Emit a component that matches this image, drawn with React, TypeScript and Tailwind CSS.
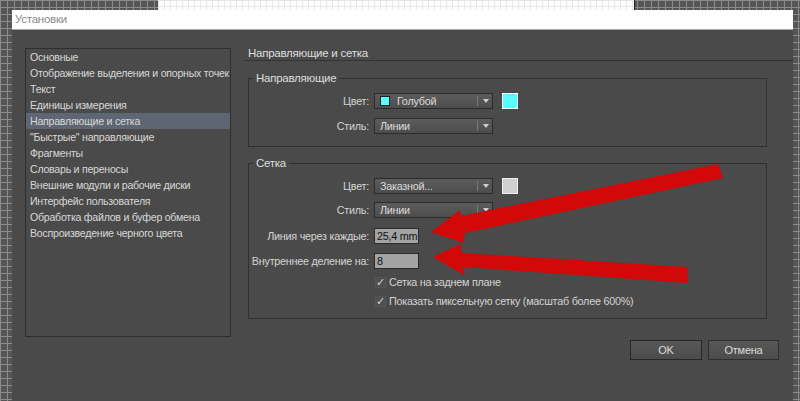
const font = "font-['Liberation_Sans','Noto_Sans',sans-serif]";

const menuItems = [
  "Основные",
  "Отображение выделения и опорных точек",
  "Текст",
  "Единицы измерения",
  "Направляющие и сетка",
  "\"Быстрые\" направляющие",
  "Фрагменты",
  "Словарь и переносы",
  "Внешние модули и рабочие диски",
  "Интерфейс пользователя",
  "Обработка файлов и буфер обмена",
  "Воспроизведение черного цвета",
];

function Select({ value, swatch }: { value: string; swatch?: string }) {
  return (
    <div className="flex h-[16px] w-[119px] items-center border border-[#2b2b2b] bg-gradient-to-b from-[#5c5c5c] to-[#4d4d4d] pl-[5px]">
      {swatch && <span className={`mr-[7px] h-[10px] w-[10px] border border-[#222] ${swatch}`} />}
      <span className="flex-1 truncate leading-[14px] text-[#dcdcdc]">{value}</span>
      <span className="h-[10px] w-px bg-[#7a7a7a]" />
      <span className="ml-[5px] mr-[3px] h-0 w-0 border-x-[3.5px] border-t-[4px] border-x-transparent border-t-[#cfcfcf]" />
    </div>
  );
}

function Row({ label, children, className = "" }: { label: string; children: React.ReactNode; className?: string }) {
  return (
    <div className={`flex items-center ${className}`}>
      <span className="w-[121px] whitespace-nowrap pr-[1px] text-right leading-[16px] text-[#d4d4d4]">{label}</span>
      <div className="ml-[4px] flex items-center">{children}</div>
    </div>
  );
}

function Field({ value }: { value: string }) {
  return (
    <div className="flex h-[16px] w-[45px] items-center whitespace-nowrap border border-[#2b2b2b] bg-[#a3a3a3] pl-[2px] leading-[14px] text-[#111]">
      {value}
    </div>
  );
}

function Check({ label, className = "" }: { label: string; className?: string }) {
  return (
    <div className={`ml-[126px] flex h-[16px] items-center whitespace-nowrap ${className}`}>
      <span className="flex h-[11px] w-[11px] items-center justify-center border border-[#555] bg-[#4f4f4f] text-[11px] leading-none text-[#d8d8d8]">
        ✓
      </span>
      <span className="ml-[3px] text-[#d4d4d4]">{label}</span>
    </div>
  );
}

export default function App() {
  return (
    <div className={`relative h-[401px] w-[800px] overflow-hidden bg-[#555] bg-[linear-gradient(#8c8c8c_1px,transparent_1px),linear-gradient(90deg,#8c8c8c_1px,transparent_1px)] bg-[length:7px_7px] text-[10.8px] tracking-[-0.25px] ${font}`}>
      <div className="flex h-[10px]">
        <div className="w-[158px]" />
        <div className="w-[477px] border-r border-[#222] bg-white bg-[linear-gradient(#e6e6e6_1px,transparent_1px),linear-gradient(90deg,#e6e6e6_1px,transparent_1px)] bg-[length:6px_6px]" />
      </div>

      <div className="ml-[12px] flex h-[391px] w-[781px] flex-col bg-[#4a4a4a]">
        <div className="flex h-[20px] items-center border-b border-[#a9a9a9] bg-white pl-[3px] text-[11.5px] text-[#8a8a8a]">
          Установки
        </div>

        <div className="flex h-[291px] pt-[16px]">
          <div className="ml-[13px] mt-[2px] h-[289px] w-[206px] border border-[#2e2e2e] text-[10.6px]">
            {menuItems.map((item, i) => (
              <div
                key={item}
                className={`h-[16px] whitespace-nowrap pl-[4px] leading-[16px] text-[#d8d8d8] ${i === 4 ? "bg-[#5e6674]" : ""}`}
              >
                {item}
              </div>
            ))}
          </div>

          <div className="ml-[14px] flex flex-1 flex-col">
            <div className="h-[15px] border-b border-[#333] pl-[3px] text-[11.5px] leading-[14px] text-[#dedede]">
              Направляющие и сетка
            </div>

            <fieldset className="ml-[3px] mr-[26px] mt-[10px] h-[76px] border border-[#303030]">
              <legend className="ml-[4px] px-[3px] text-[11.5px] leading-[14px] text-[#dedede]">Направляющие</legend>
              <Row label="Цвет:" className="mt-[8px]">
                <Select value="Голубой" swatch="bg-[#55ffff]" />
                <span className="ml-[9px] h-[16px] w-[16px] border border-white bg-[#55ffff]" />
              </Row>
              <Row label="Стиль:" className="mt-[9px]">
                <Select value="Линии" />
              </Row>
            </fieldset>

            <fieldset className="ml-[3px] mr-[26px] mt-[9px] h-[163px] border border-[#303030]">
              <legend className="ml-[4px] px-[3px] text-[11.5px] leading-[14px] text-[#dedede]">Сетка</legend>
              <Row label="Цвет:" className="mt-[8px]">
                <Select value="Заказной..." />
                <span className="ml-[9px] h-[16px] w-[16px] border border-[#eee] bg-[#d0d0d0]" />
              </Row>
              <Row label="Стиль:" className="mt-[8px]">
                <Select value="Линии" />
              </Row>
              <Row label="Линия через каждые:" className="mt-[10px]">
                <Field value="25,4 mm" />
              </Row>
              <Row label="Внутреннее деление на:" className="mt-[9px]">
                <Field value="8" />
              </Row>
              <Check label="Сетка на заднем плане" className="mt-[5px]" />
              <Check label="Показать пиксельную сетку (масштаб более 600%)" className="mt-[3px]" />
            </fieldset>
          </div>
        </div>

        <div className="mt-[19px] flex justify-end gap-[6px] pr-[14px]">
          <button className="h-[20px] w-[72px] border border-[#262626] bg-gradient-to-b from-[#575757] to-[#4c4c4c] text-[11px] text-[#dcdcdc]">OK</button>
          <button className="h-[20px] w-[71px] border border-[#2e2e2e] bg-gradient-to-b from-[#575757] to-[#4c4c4c] text-[11px] text-[#dcdcdc]">Отмена</button>
        </div>
      </div>

      <svg className="pointer-events-none absolute left-0 top-0" width="800" height="401">
        <polygon fill="#d30808" points="431,232 460,210 461,216 718,164 723,178 465,233 463,243" />
        <polygon fill="#d30808" points="433,257 460,244 462,253 687,267 688,283 463,267 464,275" />
      </svg>
    </div>
  );
}
